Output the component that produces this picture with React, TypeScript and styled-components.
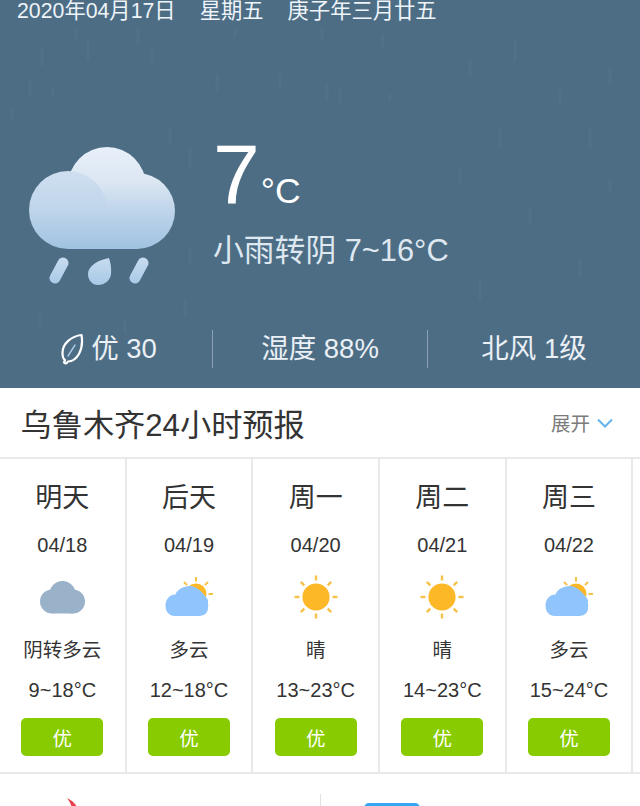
import React from 'react'
import styled, { createGlobalStyle } from 'styled-components'

const GlobalStyle = createGlobalStyle`
    html, body {
        margin: 0;
        padding: 0;
        background: #fff;
    }
    body {
        font-family: "Liberation Sans", "Noto Sans CJK SC", sans-serif;
        width: 640px;
        height: 806px;
        overflow: hidden;
    }
`

const days = [
    { name: '明天', date: '04/18', icon: 'overcast', text: '阴转多云', temp: '9~18°C' },
    { name: '后天', date: '04/19', icon: 'partly', text: '多云', temp: '12~18°C' },
    { name: '周一', date: '04/20', icon: 'sun', text: '晴', temp: '13~23°C' },
    { name: '周二', date: '04/21', icon: 'sun', text: '晴', temp: '14~23°C' },
    { name: '周三', date: '04/22', icon: 'partly', text: '多云', temp: '15~24°C' },
]

// faint rain in the header background
const streaks = [
    [76, 30, 10], [88, 40, 20], [138, 30, 12], [152, 50, 12], [235, 30, 6], [322, 30, 10], [383, 35, 12],
    [217, 75, 15], [280, 75, 13], [327, 85, 15], [340, 90, 13], [42, 50, 15], [30, 80, 15], [53, 88, 8],
    [390, 95, 6], [12, 110, 10], [470, 60, 16], [515, 40, 20], [560, 90, 14], [590, 130, 18], [610, 70, 12],
    [190, 250, 14], [125, 320, 12], [185, 300, 16], [40, 315, 10], [480, 280, 18], [530, 210, 14],
    [580, 260, 16], [610, 180, 12], [500, 130, 16], [190, 150, 18], [170, 130, 14], [460, 170, 12],
]

function RainStreaks() {
    return (
        <StreakLayer viewBox="0 0 640 388">
            {streaks.map(([x, y, h], i) => (
                <line key={i} x1={x} y1={y} x2={x} y2={y + h} stroke="#7594ac" strokeWidth="3" strokeLinecap="round" opacity="0.12" />
            ))}
        </StreakLayer>
    )
}

function RainCloud() {
    return (
        <svg width="150" height="142" viewBox="0 0 150 142" style={{ display: 'block' }}>
            <defs>
                <linearGradient id="back" gradientUnits="userSpaceOnUse" x1="0" y1="0" x2="0" y2="102">
                    <stop offset="0" stopColor="#e8f0fa" />
                    <stop offset="0.35" stopColor="#dbe6f2" />
                    <stop offset="0.62" stopColor="#bfd5ea" />
                    <stop offset="1" stopColor="#a0c2e2" />
                </linearGradient>
                <linearGradient id="front" gradientUnits="userSpaceOnUse" x1="0" y1="24" x2="0" y2="102">
                    <stop offset="0" stopColor="#cfdff0" />
                    <stop offset="0.5" stopColor="#bfd5ea" />
                    <stop offset="1" stopColor="#a0c2e2" />
                </linearGradient>
                <linearGradient id="drop" gradientUnits="userSpaceOnUse" x1="0" y1="110" x2="0" y2="140">
                    <stop offset="0" stopColor="#c8dcef" />
                    <stop offset="1" stopColor="#a6c8e6" />
                </linearGradient>
            </defs>
            <g fill="url(#back)">
                <circle cx="80" cy="39" r="39" />
                <circle cx="110" cy="64" r="38" />
                <rect x="41" y="39" width="70" height="63" />
            </g>
            <g fill="url(#front)">
                <circle cx="41" cy="63" r="39" />
            </g>
            <path d="M36 116 L28 131" stroke="url(#drop)" strokeWidth="11" strokeLinecap="round" fill="none" />
            <path d="M116 116 L108 131" stroke="url(#drop)" strokeWidth="11" strokeLinecap="round" fill="none" />
            <path d="M82 111 C84 117 84.500 122 84 127 C83.500 133 78 138 71 138 C65 138 61 133 61 127 C61 119 71 113 82 111 Z" fill="url(#drop)" />
        </svg>
    )
}

function OvercastIcon() {
    return (
        <svg width="45" height="33" viewBox="0 0 45 33" fill="#9ab1ca">
            <circle cx="22.500" cy="13" r="13" />
            <circle cx="12" cy="20.500" r="12" />
            <circle cx="33" cy="20.500" r="12" />
            <rect x="12" y="14" width="21" height="18.500" />
        </svg>
    )
}

function SunRays({ cx, cy, r1, r2, width }: { cx: number; cy: number; r1: number; r2: number; width: number }) {
    return (
        <>
            {[0, 45, 90, 135, 180, 225, 270, 315].map((a) => {
                const t = (a * Math.PI) / 180
                return (
                    <line
                        key={a}
                        x1={cx + r1 * Math.cos(t)}
                        y1={cy + r1 * Math.sin(t)}
                        x2={cx + r2 * Math.cos(t)}
                        y2={cy + r2 * Math.sin(t)}
                        stroke="#f5c34a"
                        strokeWidth={width}
                    />
                )
            })}
        </>
    )
}

function SunIcon() {
    return (
        <svg width="44" height="44" viewBox="0 0 44 44">
            <SunRays cx={22} cy={22} r1={16.500} r2={21.500} width={2.400} />
            <circle cx="22" cy="22" r="13.600" fill="#fdb827" />
        </svg>
    )
}

function PartlyIcon() {
    return (
        <svg width="48" height="40" viewBox="0 0 48 40">
            <SunRays cx={31} cy={17} r1={12.500} r2={17} width={2} />
            <circle cx="31" cy="17" r="10.500" fill="#fdb827" />
            <path
                d="M10 39 C4 39 0.500 34.500 0.500 28.500 C0.500 22 5 17.500 10.500 17.500 C12 13 18 9 25 9 C31 9 38 15 43 23 L43 31 C43 36 39 39 34 39 Z"
                fill="#8fc4fd"
            />
        </svg>
    )
}

function LeafIcon() {
    return (
        <svg width="24" height="32" viewBox="0 0 24 32" fill="none" stroke="#fff" strokeWidth="2.200">
            <path
                d="M21.500 2 C12 3 2.500 10 2.500 20 C2.500 24 3.500 26 5 27 L4 29.500 C5 31 7 30.500 8 28.500 C17 28 24 17 21.500 2 Z"
                strokeLinejoin="round"
            />
            <path d="M8 23 L15 12" stroke="#a8cbe8" strokeWidth="1.400" strokeLinecap="round" />
        </svg>
    )
}

function Chevron() {
    return (
        <svg width="16" height="10" viewBox="0 0 16 10" fill="none">
            <path d="M1 1.500 L8 8.500 L15 1.500" stroke="#63b2ee" strokeWidth="2" />
        </svg>
    )
}

const icons: Record<string, React.ReactNode> = {
    overcast: <OvercastIcon />,
    partly: <PartlyIcon />,
    sun: <SunIcon />,
}

export default function App() {
    return (
        <Page>
            <GlobalStyle />
            <Hero>
                <RainStreaks />
                <DateLine>
                    <span>2020年04月17日</span>
                    <span>星期五</span>
                    <span>庚子年三月廿五</span>
                </DateLine>
                <Current>
                    <CloudSlot>
                        <RainCloud />
                    </CloudSlot>
                    <Reading>
                        <TempLine>
                            <BigTemp>7</BigTemp>
                            <Unit>°C</Unit>
                        </TempLine>
                        <Summary>小雨转阴 7~16°C</Summary>
                    </Reading>
                </Current>
                <Stats>
                    <Stat $leaf>
                        <LeafIcon />
                        优 30
                    </Stat>
                    <Stat>湿度 88%</Stat>
                    <Stat>北风 1级</Stat>
                </Stats>
            </Hero>
            <TitleBar>
                <Title>乌鲁木齐24小时预报</Title>
                <Expand>
                    展开
                    <Chevron />
                </Expand>
            </TitleBar>
            <Forecast>
                {days.map((d) => (
                    <Day key={d.date}>
                        <DayName>{d.name}</DayName>
                        <DayDate>{d.date}</DayDate>
                        <IconSlot>{icons[d.icon]}</IconSlot>
                        <DayText>{d.text}</DayText>
                        <DayTemp>{d.temp}</DayTemp>
                        <Badge>优</Badge>
                    </Day>
                ))}
                <Day />
            </Forecast>
            <Footer>
                <FooterCell>
                    <RedMark width="22" height="12" viewBox="0 0 22 12">
                        <path d="M1 0 C7 3 11 7 12 12 L6 12 C6 8 4 4 1 0 Z" fill="#e8404a" />
                    </RedMark>
                </FooterCell>
                <FooterCell $divided>
                    <BlueMark />
                </FooterCell>
            </Footer>
        </Page>
    )
}

const Page = styled.div`
    width: 640px;
    height: 806px;
    overflow: hidden;
    background: #fff;
`

const Hero = styled.header`
    position: relative;
    height: 388px;
    background: #4d6d85;
    color: #fff;
    overflow: hidden;
`

const StreakLayer = styled.svg`
    position: absolute;
    inset: 0;
    width: 640px;
    height: 388px;
`

const DateLine = styled.div`
    position: relative;
    display: flex;
    gap: 24px;
    height: 22px;
    padding-left: 17px;
    font-size: 21.300px;
    line-height: 22px;
    color: #eef4f9;
    white-space: nowrap;
`

const Current = styled.div`
    position: relative;
    display: flex;
    align-items: flex-start;
    margin-top: 102px;
    padding-left: 27px;
`

const CloudSlot = styled.div`
    width: 186px;
    padding-top: 23px;
`

const Reading = styled.div`
    display: flex;
    flex-direction: column;
    padding-top: 2px;
`

const TempLine = styled.div`
    display: flex;
    align-items: baseline;
    height: 96px;
`

const BigTemp = styled.span`
    font-size: 84px;
    line-height: 96px;
`

const Unit = styled.span`
    margin-left: 1px;
    font-size: 35.500px;
`

const Summary = styled.div`
    margin-top: 7px;
    font-size: 30.800px;
    line-height: 44px;
    color: #dfe8f0;
    white-space: nowrap;
`

const Stats = styled.div`
    position: relative;
    display: grid;
    grid-template-columns: 212px 215px 213px;
    margin-top: 41px;
`

const Stat = styled.div<{ $leaf?: boolean }>`
    display: flex;
    align-items: center;
    justify-content: center;
    gap: 7px;
    box-sizing: border-box;
    height: 38px;
    padding-bottom: 6px;
    padding-left: ${(p) => (p.$leaf ? '5px' : '0')};
    font-size: 27.500px;
    color: #eaf0f5;
    white-space: pre;
    & + & {
        border-left: 1px solid #8ba2b4;
    }
    svg {
        margin-top: 6px;
    }
`

const TitleBar = styled.div`
    display: flex;
    align-items: center;
    justify-content: space-between;
    height: 69px;
    padding: 0 27px 0 20.500px;
`

const Title = styled.h1`
    margin: 0;
    font-size: 31.200px;
    font-weight: 400;
    color: #333;
    white-space: nowrap;
`

const Expand = styled.div`
    display: flex;
    align-items: center;
    gap: 7px;
    font-size: 19.500px;
    color: #7b7b7b;
`

const Forecast = styled.div`
    display: grid;
    grid-template-columns: repeat(6, 126.67px);
    height: 317px;
    overflow: hidden;
    border-top: 2px solid #e9e9e9;
    border-bottom: 2px solid #e9e9e9;
    box-sizing: border-box;
`

const Day = styled.div`
    display: flex;
    flex-direction: column;
    align-items: center;
    box-sizing: border-box;
    height: 100%;
    border-right: 2px solid #e9e9e9;
    color: #333;
`

const DayName = styled.div`
    margin-top: 21px;
    font-size: 27px;
    line-height: 36px;
`

const DayDate = styled.div`
    margin-top: 17px;
    font-size: 20px;
    line-height: 24px;
`

const IconSlot = styled.div`
    display: flex;
    align-items: center;
    justify-content: center;
    height: 48px;
    margin-top: 16px;
`

const DayText = styled.div`
    margin-top: 16px;
    font-size: 19.500px;
    line-height: 26px;
`

const DayTemp = styled.div`
    margin-top: 14px;
    font-size: 20px;
    line-height: 26px;
    white-space: nowrap;
`

const Badge = styled.div`
    display: flex;
    align-items: center;
    justify-content: center;
    width: 82px;
    height: 38px;
    margin-top: 15px;
    border-radius: 5px;
    background: #87cb00;
    color: #fff;
    font-size: 19.500px;
`

const Footer = styled.div`
    display: grid;
    grid-template-columns: 1fr 1fr;
    height: 32px;
`

const FooterCell = styled.div<{ $divided?: boolean }>`
    box-sizing: border-box;
    ${(p) =>
        p.$divided
            ? 'margin-top: 20px; padding: 9px 0 0 43px; border-left: 1px solid #e0e0e0;'
            : 'padding: 24px 0 0 66px;'}
`

const RedMark = styled.svg`
    display: block;
`

const BlueMark = styled.div`
    width: 56px;
    height: 10px;
    border-radius: 5px 5px 0 0;
    background: #36a5f2;
`
